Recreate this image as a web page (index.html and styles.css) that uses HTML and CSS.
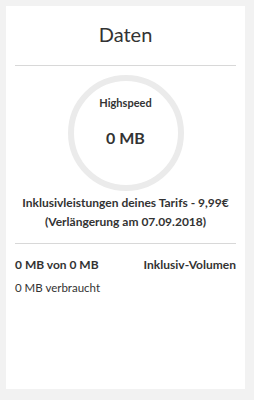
FILE: index.html
```html
<!DOCTYPE html>
<html>
<head>
<meta charset="utf-8">
<link rel="stylesheet" href="styles.css">
</head>
<body>
<div class="card">
  <h1 class="title">Daten</h1>
  <hr class="divider">
  <div class="gauge">
    <div class="gauge-label">Highspeed</div>
    <div class="gauge-value">0 MB</div>
  </div>
  <p class="tariff">Inklusivleistungen deines Tarifs - 9,99€<br>(Verlängerung am 07.09.2018)</p>
  <hr class="divider divider-lower">
  <div class="row">
    <span class="strong">0 MB von 0 MB</span>
    <span class="strong">Inklusiv-Volumen</span>
  </div>
  <div class="used">0 MB verbraucht</div>
</div>
</body>
</html>
```
FILE: styles.css
```css
html, body {
  margin: 0;
  padding: 0;
  background: #f2f2f2;
}
body {
  padding: 6px;
  font-family: "Lato", "Open Sans", sans-serif;
  color: #333;
}
.card {
  background: #fff;
  height: 383px;
  width: 239px;
  padding: 0 9px;
  box-sizing: border-box;
}
.title {
  margin: 0;
  height: 40px;
  padding-top: 16px;
  font-size: 20px;
  font-weight: 400;
  text-align: center;
  line-height: 24px;
  box-sizing: border-box;
}
.divider {
  border: 0;
  border-top: 1px solid #d8d8d8;
  margin: 19px 0 0;
}
.gauge {
  width: 104px;
  height: 104px;
  border: 6px solid #ebebeb;
  border-radius: 50%;
  margin: 9px auto 0;
  display: flex;
  flex-direction: column;
  align-items: center;
  font-weight: 700;
}
.gauge-label {
  font-size: 11px;
  line-height: 13px;
  margin-top: 15px;
}
.gauge-value {
  font-size: 16px;
  line-height: 19px;
  margin-top: 19px;
}
.tariff {
  margin: 2px 0 0;
  text-align: center;
  font-size: 12px;
  font-weight: 700;
  line-height: 19px;
}
.divider-lower {
  margin-top: 12px;
}
.row {
  display: flex;
  justify-content: space-between;
  margin-top: 13px;
  font-size: 12px;
  line-height: 16px;
}
.strong { font-weight: 700; }
.used {
  margin-top: 7px;
  font-size: 11.5px;
  line-height: 16px;
}
```
